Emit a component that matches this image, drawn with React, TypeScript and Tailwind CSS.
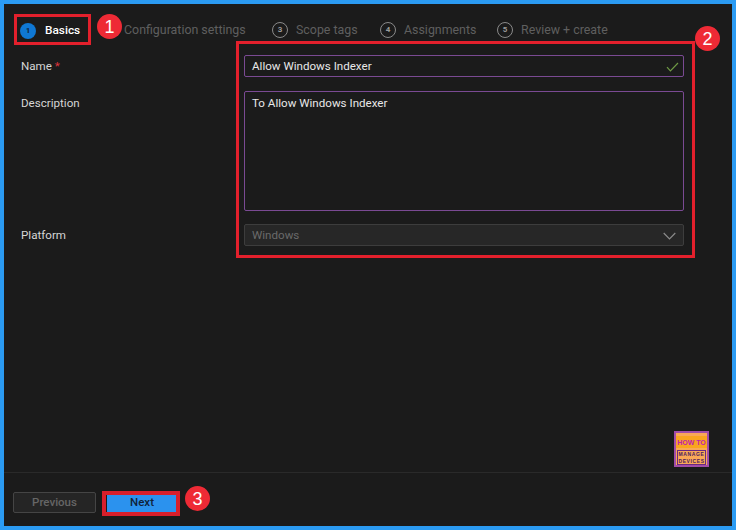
import React from "react";

function Step({ n, label, className }: { n: number; label: string; className: string }) {
  return (
    <div className={`flex items-center ${className}`}>
      <span className="flex h-[16px] w-[16px] items-center justify-center rounded-full border border-[#8a8a8a] text-[8px] font-bold leading-none text-[#9a9a9a]">
        {n}
      </span>
      <span className="ml-[8px] text-[12.4px] text-[#5f5f5f]">{label}</span>
    </div>
  );
}

function Badge({ n, className }: { n: number; className: string }) {
  return (
    <div
      className={`absolute flex h-[25px] w-[25px] items-center justify-center rounded-full bg-[#ee2a35] font-['Liberation_Sans',sans-serif] text-[18px] leading-none text-white ${className}`}
    >
      {n}
    </div>
  );
}

export default function App() {
  return (
    <div className="relative box-border flex h-[530px] w-[736px] flex-col overflow-hidden border-4 border-[#2b9bf3] bg-[#1b1b1b] font-['Roboto','Noto_Sans',sans-serif] text-[#d6d6d6]">
      <div className="flex h-[51px] shrink-0 items-center pl-[16px] pt-[2px]">
        <div className="flex w-[104px] items-center">
          <span className="flex h-[16px] w-[16px] items-center justify-center rounded-full bg-[#0f78d4] text-[8px] font-bold leading-none text-[#10233a]">
            1
          </span>
          <span className="ml-[9px] text-[11.8px] font-medium text-white">Basics</span>
        </div>
        <span className="w-[148px] text-[12.4px] text-[#5f5f5f]">Configuration settings</span>
        <Step n={3} label="Scope tags" className="w-[108px]" />
        <Step n={4} label="Assignments" className="w-[117px]" />
        <Step n={5} label="Review + create" className="" />
      </div>

      <div className="flex flex-1 flex-col pl-[17px] pr-[48px] text-[11.6px]">
        <div className="flex h-[22px] items-center">
          <div className="w-[223px] pt-[1px]">
            Name <span className="text-[#e0343c]">*</span>
          </div>
          <div className="box-border flex h-[22px] flex-1 items-center justify-between rounded-[2px] border border-[#7a4a93] pl-[7px] pr-[4px] pt-[1px] text-[#e8e8e8]">
            <span>Allow Windows Indexer</span>
            <svg width="13" height="10" viewBox="0 0 13 10" fill="none" stroke="#6f9a45" strokeWidth="1.2">
              <path d="M1 5.2 4.4 8.8 12 1" />
            </svg>
          </div>
        </div>

        <div className="mt-[14px] flex h-[120px]">
          <div className="w-[223px] pt-[4px]">Description</div>
          <div className="box-border flex-1 rounded-[2px] border border-[#7a4a93] pl-[7px] pt-[3px] text-[#e8e8e8]">
            To Allow Windows Indexer
          </div>
        </div>

        <div className="mt-[13px] flex h-[22px] items-center">
          <div className="w-[223px] pt-[1px]">Platform</div>
          <div className="box-border flex h-[22px] flex-1 items-center justify-between rounded-[2px] border border-[#3d3d3d] bg-[#272727] pl-[7px] pr-[7px] pt-[1px] text-[#6a6a6a]">
            <span>Windows</span>
            <svg width="13" height="8" viewBox="0 0 13 8" fill="none" stroke="#8a8a8a" strokeWidth="1.2">
              <path d="M.7 1 6.5 6.8 12.3 1" />
            </svg>
          </div>
        </div>
      </div>

      <div className="box-border flex h-[54px] shrink-0 items-start gap-[11px] border-t border-[#2a2a2a] pl-[9px] pt-[19px] text-[11.5px] font-medium">
        <div className="box-border flex h-[21px] w-[83px] items-center justify-center rounded-[2px] border border-[#454545] bg-[#252525] pt-[1px] text-[#666666]">
          Previous
        </div>
        <div className="flex h-[21px] w-[70px] items-center justify-center bg-[#2b92ee] pt-[1px] text-[#10233a]">Next</div>
      </div>

      {/* Annotations */}
      <div className="absolute left-[10px] top-[10px] h-[31px] w-[77px] border-[3px] border-[#e3202c]" />
      <div className="absolute left-[232px] top-[37px] h-[217px] w-[459px] border-[3px] border-[#e3202c]" />
      <div className="absolute left-[98px] top-[487px] h-[25px] w-[78px] border-[4px] border-[#d81f2b]" />
      <Badge n={1} className="left-[93px] top-[10px]" />
      <Badge n={2} className="left-[691px] top-[22px]" />
      <Badge n={3} className="left-[181px] top-[482px]" />

      {/* Logo */}
      <div className="absolute left-[670px] top-[427px] box-border flex h-[36px] w-[35px] flex-col items-center border-[2px] border-[#a04ca8] bg-[#f9a857] font-['Liberation_Sans',sans-serif] font-bold leading-none">
        <span className="mt-[3px] flex h-[12px] w-full items-center justify-center bg-[#f9a51f] text-[7px] text-[#c01fb0]">
          HOW TO
        </span>
        <span className="mt-[2px] w-[29px] border border-[#6a2a80] text-center text-[5px] leading-[6.5px] tracking-[0.6px] text-[#4a1a60]">
          MANAGE
          <br />
          DEVICES
        </span>
      </div>
    </div>
  );
}
